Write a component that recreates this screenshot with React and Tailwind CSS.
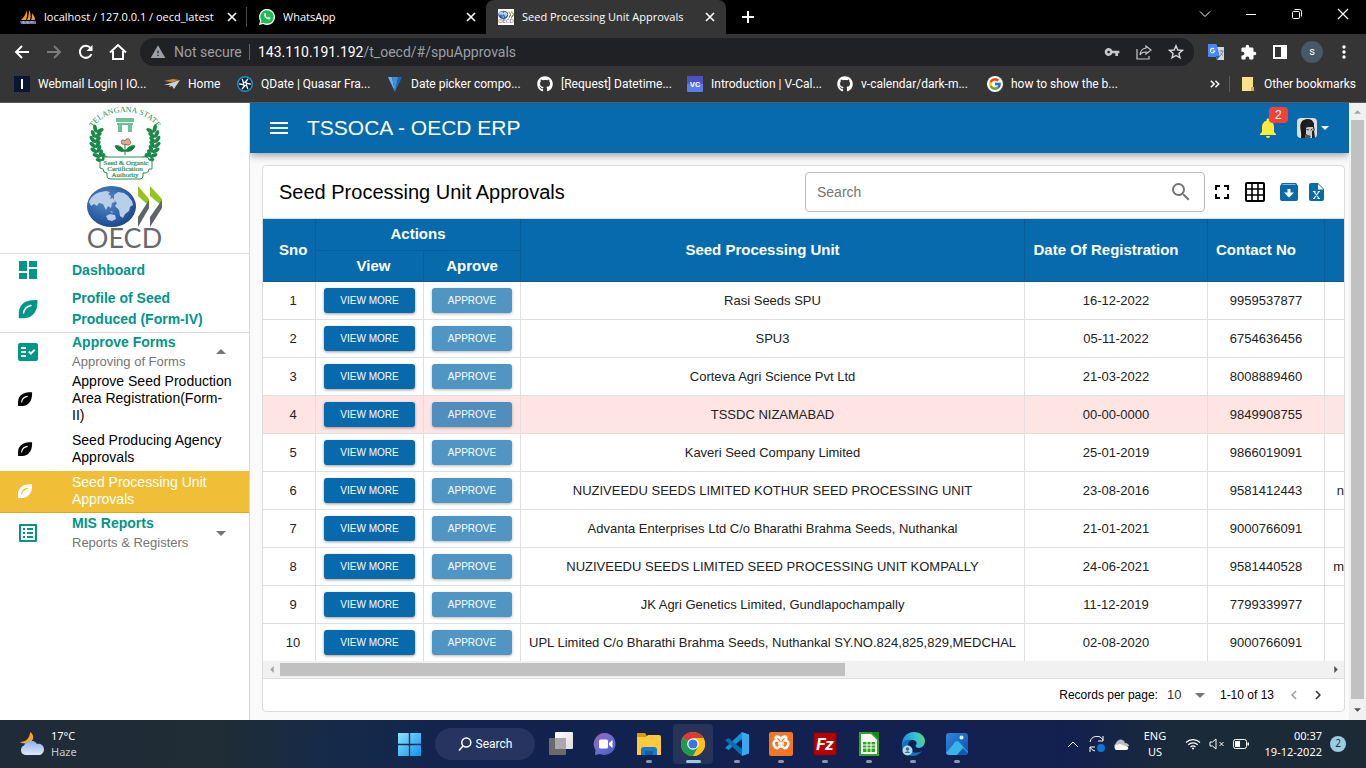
import React from "react";
import {
  MdDashboard, MdFactCheck, MdListAlt, MdMenu, MdNotifications, MdSearch, MdFullscreen,
  MdArrowDropDown, MdArrowDropUp, MdChevronLeft, MdChevronRight, MdWarning, MdVpnKey, MdExtension,
} from "react-icons/md";
import { FaGithub } from "react-icons/fa";
import { FcGoogle } from "react-icons/fc";

/* ---------- small drawings ---------- */

function Leaf({ className, vein = "#fff" }) {
  return (
    <svg viewBox="0 0 24 24" className={className} aria-hidden="true">
      <path d="M21.500 3.500Q21.500 3 21 3C15 3 10 3.500 6.500 7 3 10.500 2.500 14 2.800 21.200 10 21.500 13.500 21 17 17.500c3.500-3.500 4.500-8 4.500-14z" fill="currentColor" />
      <path d="M7.500 16C8 12.500 10.500 9.500 15 8.500" stroke={vein} strokeWidth="1.500" fill="none" strokeLinecap="round" />
    </svg>
  );
}

function Close() {
  return (
    <svg viewBox="0 0 16 16" className="size-4" aria-hidden="true">
      <path d="M4 4l8 8M12 4l-8 8" stroke="#fff" strokeWidth="1.600" />
    </svg>
  );
}

function Sails() {
  return (
    <svg viewBox="0 0 16 16" className="size-4 shrink-0" aria-hidden="true">
      <path d="M7 1C6 5 4 8 1 11h5c1-3 1.500-6 1-10z" fill="#f89c0e" />
      <path d="M9 1c2 3 2 7 1 10H7c1.500-3 2-6 2-10z" fill="#f89c0e" />
      <path d="M12 4c2 2 3 5 3 7h-4c1-2 1.400-4 1-7z" fill="#e8a13c" />
      <path d="M0 12h16v3H1z" fill="#6c78af" />
      <path d="M2 13h2v2M6 13h2v2M10 13h3" stroke="#c3c9e3" strokeWidth="0.800" fill="none" />
    </svg>
  );
}

function WhatsApp() {
  return (
    <svg viewBox="0 0 16 16" className="size-4 shrink-0" aria-hidden="true">
      <path d="M0 16l1.100-4A8 8 0 1 1 4.200 15z" fill="#fff" />
      <path d="M1.500 14.500l.8-3A6.700 6.700 0 1 1 4.600 13.700z" fill="#1ebd53" />
      <path d="M5.600 4.200c.5-.4.900-.3 1.100.2l.5 1.200c.1.400-.6.900-.5 1.200.5.900 1.300 1.600 2.200 2 .4.100.8-.8 1.200-.7l1.300.7c.4.300 0 1.200-.5 1.500-1 .6-2.500.1-4-1.200C5.300 7.700 4.300 5.400 5.600 4.200z" fill="#fff" />
    </svg>
  );
}

function Globe({ className, plate = false }) {
  return (
    <svg viewBox="0 0 78 64" className={className} role="img" aria-label="OECD logo">
      <defs>
        <radialGradient id="globe" cx="0.4" cy="0.35" r="0.75">
          <stop offset="0" stopColor="#5b8ac6" />
          <stop offset="0.600" stopColor="#2c5fa6" />
          <stop offset="1" stopColor="#1b3f7f" />
        </radialGradient>
      </defs>
      {plate && <rect width="78" height="64" fill="#fff" />}
      <ellipse cx="25.500" cy="21.500" rx="24.500" ry="20.500" fill="url(#globe)" />
      <path
        d="M3 17c1-4 6-9 12-10l5-1 4 1-2 2 3 2-1 3 3-1 2 4-3 1-1 5-3-2-2 4-3-6-4-1-2 3-3-2-3 2zM28 10l4-3 6 1 4 3 4 5 1 4-3 2-1 4-4 3-2 4-3-2-1-6-4-4 2-3-3-3zM20 31l4-2 5 1 1 4-4 2-4-1zM24 26l3 1-1 1z"
        fill="#b9cfe8"
      />
      <path d="M52 1l11 13v7L52 11z" fill="#97c31e" />
      <path d="M64 1l12 13v7L64 11z" fill="#97c31e" />
      <path d="M63 15v8L52 42V32z" fill="#626366" />
      <path d="M76 15v8L64 42V32z" fill="#626366" />
      <text x="38.500" y="63" textAnchor="middle" fontFamily="Lato, sans-serif" fontSize="27" fill="#68696c">OECD</text>
    </svg>
  );
}

const leafSteps = [0, 1, 2, 3, 4, 5, 6, 7];

function StateSeal() {
  return (
    <svg viewBox="0 0 76 76" className="h-[76px] w-[76px] overflow-visible" role="img" aria-label="Telangana State Seed and Organic Certification Authority">
      <defs>
        <path id="sealArc" d="M3 34A35 27 0 0 1 73 34" />
      </defs>
      <text fontFamily="Liberation Serif, serif" fontSize="8" fill="#2a8f55">
        <textPath href="#sealArc" startOffset="50%" textAnchor="middle">TELANGANA STATE</textPath>
      </text>
      {[-1, 1].map((side) =>
        leafSteps.map((i) => {
          const a = ((-24 + i * 10.5) * Math.PI) / 180;
          const x = 38 + side * Math.cos(a) * 30;
          const y = 36 + Math.sin(a) * 28;
          const t = side * (-24 + i * 10.5);
          return (
            <g key={side + "-" + i} transform={`translate(${x} ${y}) rotate(${t})`} fill="#178a48">
              <ellipse cx={-2.6} cy="0" rx="1.900" ry="4" transform="rotate(-38 -2.600 0)" />
              <ellipse cx={2.6} cy="0" rx="1.900" ry="4" transform="rotate(38 2.600 0)" />
            </g>
          );
        })
      )}
      <path d="M29 13h18v4H29zM30 18h16v2H30zM31 20h4v7h-4zM41 20h4v7h-4z" fill="#6fc096" />
      <path d="M38 50V38M38 46c-4-5-7-6-10-5 2 5 6 6 10 5zM38 46c4-5 7-6 10-5-2 5-6 6-10 5z" fill="#14813f" stroke="#14813f" strokeWidth="1" />
      <path d="M35 39c-2-4 1-5 3-3 1-3 5-3 5 0 2 2 0 4-2 4z" fill="#dcae95" stroke="#8a4b35" strokeWidth="0.800" />
      <path d="M17 52h42q3 0 3 3l3 1v8h-3q0 3-3 4h-3v3q0 3-3 3H24q-4 0-4-3v-3q-4 0-4-4l-3-1v-7l4-1z" fill="#fff" stroke="#2a8f55" strokeWidth="1" />
      <g fontFamily="Liberation Serif, serif" fontSize="7" fill="#2a8f55" stroke="#2a8f55" strokeWidth="0.200" textAnchor="middle">
        <text x="39" y="60">Seed &amp; Organic</text>
        <text x="38" y="66">Certification</text>
        <text x="38" y="72">Authority</text>
      </g>
    </svg>
  );
}

/* ---------- browser frame ---------- */

function Tab({ icon, title, active }) {
  return (
    <div
      className={
        "flex h-full w-60 items-center pl-3 " +
        (active ? "rounded-t-lg bg-[#353535]" : "")
      }
    >
      {icon}
      <span className="ml-2 w-[175px] whitespace-nowrap">{title}</span>
      <button aria-label={"Close " + title} className="ml-[5px] shrink-0"><Close /></button>
    </div>
  );
}

function TabStrip() {
  return (
    <div className="flex h-[34px] shrink-0 items-center bg-black pl-2 font-['Open_Sans',sans-serif] text-[11px] text-white">
      <div className="flex h-full w-[239px] items-center">
        <Tab icon={<Sails />} title="localhost / 127.0.0.1 / oecd_latest" />
        <span className="h-5 w-px shrink-0 bg-[#4a4a4a]" />
      </div>
      <div className="flex h-full w-[239px] items-center">
        <Tab icon={<WhatsApp />} title="WhatsApp" />
      </div>
      <Tab icon={<Globe className="size-4 shrink-0 bg-white" plate />} title="Seed Processing Unit Approvals" active />
      <button aria-label="New tab" className="ml-[14px]">
        <svg viewBox="0 0 16 16" className="size-4"><path d="M8 2v12M2 8h12" stroke="#fff" strokeWidth="2" /></svg>
      </button>
      <div className="ml-auto flex h-7 items-center self-start">
        <button aria-label="Search tabs" className="grid w-[46px] place-items-center">
          <svg viewBox="0 0 12 12" className="size-3"><path d="M1 3.500l5 5 5-5" stroke="#fff" fill="none" /></svg>
        </button>
        <button aria-label="Minimize" className="grid w-[46px] place-items-center">
          <svg viewBox="0 0 12 12" className="size-3"><path d="M1 6.500h10" stroke="#fff" /></svg>
        </button>
        <button aria-label="Restore" className="grid w-[46px] place-items-center">
          <svg viewBox="0 0 12 12" className="size-3" fill="none" stroke="#fff">
            <rect x="1.500" y="3.500" width="7" height="7" rx="1" />
            <path d="M3.500 1.500h5a2 2 0 0 1 2 2v5" />
          </svg>
        </button>
        <button aria-label="Close window" className="grid w-[46px] place-items-center">
          <svg viewBox="0 0 12 12" className="size-3"><path d="M1 1l10 10M11 1L1 11" stroke="#fff" strokeWidth="1.200" /></svg>
        </button>
      </div>
    </div>
  );
}

function ToolButton({ label, children }) {
  return <button aria-label={label} className="grid h-8 w-8 shrink-0 place-items-center text-white">{children}</button>;
}

function AddressBar() {
  return (
    <div className="flex h-9 shrink-0 items-center bg-[#353535] px-[6px]">
      <ToolButton label="Back">
        <svg viewBox="0 0 16 16" className="size-4" fill="none" stroke="#fff" strokeWidth="1.900"><path d="M15 8H2M8 2L2 8l6 6" /></svg>
      </ToolButton>
      <ToolButton label="Forward">
        <svg viewBox="0 0 16 16" className="size-4" fill="none" stroke="#7c7c7c" strokeWidth="1.900"><path d="M1 8h13M8 2l6 6-6 6" /></svg>
      </ToolButton>
      <ToolButton label="Reload">
        <svg viewBox="0 0 16 16" className="size-4" fill="none" stroke="#fff" strokeWidth="2"><path d="M13.500 10A6 6 0 1 1 12.500 4" /><path d="M14.500 1v6h-6z" fill="#fff" stroke="none" /></svg>
      </ToolButton>
      <ToolButton label="Home">
        <svg viewBox="0 0 18 18" className="size-[18px]" fill="none" stroke="#fff" strokeWidth="2"><path d="M1 9.500L9 2l8 7.500M4 8v8h10V8" /></svg>
      </ToolButton>
      <div className="ml-[6px] flex h-7 flex-1 items-center rounded-full bg-[#202124] pl-[10px] pr-[2px] text-sm text-[#9aa0a6]">
        <MdWarning className="size-4" />
        <span className="ml-2 w-[67px] whitespace-nowrap">Not secure</span>
        <span className="mx-2 h-4 w-px bg-[#5f6368]" />
        <span className="flex-1 whitespace-nowrap"><span className="text-white">143.110.191.192</span>/t_oecd/#/spuApprovals</span>
        <ToolButton label="Passwords"><MdVpnKey className="size-4 text-[#c7c9cc]" /></ToolButton>
        <ToolButton label="Share">
          <svg viewBox="0 0 16 16" className="size-4" fill="none" stroke="#c7c9cc" strokeWidth="1.200"><path d="M1 5v10h12v-3M10 2l5 4-5 4V8C7 8 5 9 4 11c0-4 3-6.500 6-7z" /></svg>
        </ToolButton>
        <ToolButton label="Bookmark this page">
          <svg viewBox="0 0 16 16" className="size-4" fill="none" stroke="#d7d9dc" strokeWidth="1.400"><path d="M8 1.800l1.800 4.200 4.600.4-3.500 3 1.100 4.500L8 11.500l-4 2.400 1.100-4.500-3.500-3L6.200 6z" /></svg>
        </ToolButton>
      </div>
      <div className="ml-[6px] flex">
        <ToolButton label="Google Translate">
          <svg viewBox="0 0 16 16" className="size-4">
            <path d="M6 3h10v13H9z" fill="#d4d7db" />
            <path d="M0 0h8.500L12 13H1q-1 0-1-1z" fill="#4688f1" />
            <path d="M8 12h4l-3 4z" fill="#2b59c3" />
            <path d="M6.300 5.200A2.200 2.200 0 1 0 6.700 7H5" stroke="#fff" strokeWidth="1.100" fill="none" />
            <path d="M11.500 7h4M13.500 6v1M15 7c-.5 2-2 4-3 5M12 8.500c1 1.500 2 2.500 3 3" stroke="#6b7a8c" strokeWidth="0.800" fill="none" />
          </svg>
        </ToolButton>
        <ToolButton label="Extensions"><MdExtension className="size-[17px]" /></ToolButton>
        <ToolButton label="Side panel">
          <svg viewBox="0 0 16 16" className="size-4"><path d="M1 1h14v14H1zM3 3v10h6V3z" fill="#fff" fillRule="evenodd" /></svg>
        </ToolButton>
        <ToolButton label="Profile"><span className="grid size-[22px] place-items-center rounded-full bg-[#455a64] text-[11px]">s</span></ToolButton>
        <ToolButton label="Menu">
          <svg viewBox="0 0 16 16" className="size-4" fill="#fff"><circle cx="8" cy="3" r="1.700" /><circle cx="8" cy="8" r="1.700" /><circle cx="8" cy="13" r="1.700" /></svg>
        </ToolButton>
      </div>
    </div>
  );
}

const bookmarks = [
  { title: "Webmail Login | IO...", icon: <svg viewBox="0 0 16 16" className="size-4"><path d="M0 0h16v16H0z" fill="#0a1433" /><path d="M7 3h2v10H7z" fill="#fff" /></svg> },
  { title: "Home", narrow: true, icon: <svg viewBox="0 0 16 16" className="size-4"><path d="M0 5l9-2 6 1-7 2z" fill="#dd8a3c" /><path d="M0 9l16-5-6 9-2-3-3 1 1-2z" fill="#cfd1d4" /></svg> },
  { title: "QDate | Quasar Fra...", icon: (
    <svg viewBox="0 0 16 16" className="size-4">
      <circle cx="8" cy="8" r="7.300" fill="#14222e" stroke="#1697dc" strokeWidth="1.400" />
      {[0, 60, 120, 180, 240, 300].map((r) => <path key={r} d="M8 6.500l3-3.500" stroke="#fff" strokeWidth="1.300" transform={`rotate(${r} 8 8)`} />)}
      <circle cx="8" cy="8" r="2.200" fill="#fff" /><circle cx="8" cy="8" r="1.200" fill="#1976d2" />
    </svg>
  ) },
  { title: "Date picker compo...", icon: <svg viewBox="0 0 16 16" className="size-4"><path d="M1 1h4l3 15z" fill="#63b5f6" /><path d="M15 1h-4L8 16z" fill="#1867c0" /><path d="M5 1h6L8 16z" fill="#3d8fe0" /></svg> },
  { title: "[Request] Datetime...", icon: <FaGithub className="size-4 text-white" /> },
  { title: "Introduction | V-Cal...", icon: <svg viewBox="0 0 16 16" className="size-4"><rect width="16" height="16" rx="1" fill="#5a7df0" /><path d="M0 0h16v8H0z" fill="#4a52c4" /><text x="8" y="11" textAnchor="middle" fontSize="8" fontWeight="700" fontFamily="Roboto, sans-serif" fill="#fff">VC</text></svg> },
  { title: "v-calendar/dark-m...", icon: <FaGithub className="size-4 text-white" /> },
  { title: "how to show the b...", icon: <span className="grid size-4 place-items-center rounded-full bg-white"><FcGoogle className="size-[14px]" /></span> },
];

function Bookmarks() {
  return (
    <nav className="flex h-[33px] shrink-0 items-center border-b border-[#5a5a5a] bg-[#353535] pb-1 pl-[14px] pr-[10px] text-xs text-white">
      <div className="flex flex-1 gap-4 overflow-hidden">
        {bookmarks.map((b) => (
          <a key={b.title} href="#bookmark" className="flex shrink-0 items-center gap-2">
            {b.icon}
            <span className={b.narrow ? "w-[33px] whitespace-nowrap" : "w-[110px] whitespace-nowrap"}>{b.title}</span>
          </a>
        ))}
      </div>
      <button aria-label="More bookmarks" className="px-[9px]">
        <svg viewBox="0 0 12 12" className="size-[10px]" fill="none" stroke="#fff" strokeWidth="1.800"><path d="M1 2l4 4-4 4M6.500 2l4 4-4 4" /></svg>
      </button>
      <span className="h-4 w-px bg-[#5a5a5a]" />
      <a href="#other" className="ml-[11px] flex items-center gap-[9px]">
        <svg viewBox="0 0 14 16" className="h-4 w-[14px]"><path d="M1 1h11v14H1z" fill="#fbe08a" /><path d="M10 11h3v4h-3z" fill="#d9ac3a" /></svg>
        Other bookmarks
      </a>
    </nav>
  );
}

/* ---------- application ---------- */

function Sidebar() {
  const title = "text-sm font-bold text-[#009688]";
  return (
    <aside className="w-[250px] shrink-0 overflow-hidden border-r border-[#d8d8d8] bg-white">
      <div className="flex h-[151px] flex-col items-center gap-1 border-b border-[#dcdcdc] pt-[2px]">
        <StateSeal />
        <Globe className="h-[64px] w-[78px] overflow-visible" />
      </div>
      <nav>
        <a href="#dashboard" className="flex h-8 items-center px-4">
          <MdDashboard className="size-6 text-[#009688]" />
          <span className={"ml-8 " + title}>Dashboard</span>
        </a>
        <a href="#profile" className="flex h-[47px] items-center border-b border-[#dcdcdc] px-4">
          <Leaf className="size-6 shrink-0 text-[#009688]" />
          <span className={"ml-8 w-36 leading-[21px] " + title}>Profile of Seed Produced (Form-IV)</span>
        </a>
        <button className="flex h-10 w-full items-center px-4 pb-[2px] text-left">
          <MdFactCheck className="size-6 text-[#009688]" />
          <span className="ml-8 flex-1">
            <span className={"block leading-5 " + title}>Approve Forms</span>
            <span className="block text-[13px] leading-5 text-[#757575]">Approving of Forms</span>
          </span>
          <MdArrowDropUp className="size-6 text-[#757575]" />
        </button>
        <a href="#area" className="flex h-[51px] items-center pl-4 text-sm leading-[17px] text-black">
          <Leaf className="size-[18px] shrink-0 text-black" />
          <span className="ml-[38px]">Approve Seed Production Area Registration(Form-<br />II)</span>
        </a>
        <a href="#agency" className="flex h-[47px] items-center pl-4 pt-[2px] text-sm leading-[17px] text-black">
          <Leaf className="size-[18px] shrink-0 text-black" />
          <span className="ml-[38px]">Seed Producing Agency Approvals</span>
        </a>
        <a href="#unit" className="flex h-[42px] items-center border-b border-[#d9a92c] bg-[#f1bf37] px-4 pb-[2px] text-sm leading-[17px] text-white">
          <Leaf className="size-[18px] shrink-0 text-white" vein="#f1bf37" />
          <span className="ml-[38px]">Seed Processing Unit Approvals</span>
        </a>
        <button className="flex h-10 w-full items-center px-4 text-left">
          <MdListAlt className="size-6 text-[#009688]" />
          <span className="ml-8 flex-1">
            <span className={"block leading-5 " + title}>MIS Reports</span>
            <span className="block text-[13px] leading-5 text-[#757575]">Reports &amp; Registers</span>
          </span>
          <MdArrowDropDown className="size-6 text-[#757575]" />
        </button>
      </nav>
    </aside>
  );
}

function Avatar() {
  return (
    <svg viewBox="0 0 20 20" className="size-5 rounded" role="img" aria-label="User">
      <path d="M0 0h20v20H0z" fill="#dedede" />
      <path d="M4 20C5 14 2 9 4 5c1-3 4-4 7-4 5 0 6 4 6 8l1 4-3-3-6 0v6l-1 4z" fill="#1a1a1a" />
      <path d="M9 9l7 0 1 5-4 4-4-3z" fill="#c8c8c8" />
      <path d="M9.500 11.500l2.500.5M13.500 12l2-1" stroke="#333" />
      <path d="M7 10c3 0 5-1 6-4l4 4V5l-6-3z" fill="#222" />
      <path d="M9 16l5 2-1 2H8z" fill="#555" />
      <path d="M15 13l2-1 1 8h-3z" fill="#222" />
    </svg>
  );
}

function AppHeader() {
  return (
    <header className="relative flex h-[50px] shrink-0 items-center bg-[#076aad] pl-[17px] pr-5 text-white shadow-[0_2px_8px_rgba(0,0,0,0.4)]">
      <button aria-label="Toggle menu"><MdMenu className="size-6" /></button>
      <h1 className="ml-4 flex-1 text-[21px]">TSSOCA - OECD ERP</h1>
      <button aria-label="Notifications" className="relative mr-[17px]">
        <MdNotifications className="size-6 text-[#ffeb3b]" />
        <span className="absolute -top-[9px] left-[13px] rounded bg-[#f44336] px-[6px] text-xs leading-4">2</span>
      </button>
      <button aria-label="Account" className="flex items-center gap-1">
        <Avatar />
        <svg viewBox="0 0 8 4" className="h-1 w-2"><path d="M0 0h8L4 4z" fill="#fff" /></svg>
      </button>
    </header>
  );
}

const rows = [
  ["Rasi Seeds SPU", "16-12-2022", "9959537877", ""],
  ["SPU3", "05-11-2022", "6754636456", ""],
  ["Corteva Agri Science Pvt Ltd", "21-03-2022", "8008889460", ""],
  ["TSSDC NIZAMABAD", "00-00-0000", "9849908755", ""],
  ["Kaveri Seed Company Limited", "25-01-2019", "9866019091", ""],
  ["NUZIVEEDU SEEDS LIMITED KOTHUR SEED PROCESSING UNIT", "23-08-2016", "9581412443", "n"],
  ["Advanta Enterprises Ltd C/o Bharathi Brahma Seeds, Nuthankal", "21-01-2021", "9000766091", ""],
  ["NUZIVEEDU SEEDS LIMITED SEED PROCESSING UNIT KOMPALLY", "24-06-2021", "9581440528", "m"],
  ["JK Agri Genetics Limited, Gundlapochampally", "11-12-2019", "7799339977", ""],
  ["UPL Limited C/o Bharathi Brahma Seeds, Nuthankal SY.NO.824,825,829,MEDCHAL", "02-08-2020", "9000766091", ""],
];

function UnitTable() {
  const th = "border-b border-r border-[#0a5d97] p-0 ";
  return (
    <table className="w-full table-fixed border-separate border-spacing-0 text-center text-[13px] text-[#222]">
      <colgroup>
        <col className="w-[53px]" />
        <col className="w-[108px]" />
        <col className="w-[97px]" />
        <col className="w-[504px]" />
        <col className="w-[183px]" />
        <col className="w-[117px]" />
        <col />
      </colgroup>
      <thead className="bg-[#076aad] text-[15px] font-bold text-white">
        <tr className="h-8">
          <th rowSpan={2} className={th + "pl-4 pr-2"}>Sno</th>
          <th colSpan={2} className={th}>Actions</th>
          <th rowSpan={2} className={th + "pl-2 pr-7"}>Seed Processing Unit</th>
          <th rowSpan={2} className={th + "whitespace-nowrap pl-2 pr-7"}>Date Of Registration</th>
          <th rowSpan={2} className={th + "whitespace-nowrap pl-2 pr-7"}>Contact No</th>
          <th rowSpan={2} className="border-b border-[#0a5d97] p-0" />
        </tr>
        <tr className="h-[31px]">
          <th className={th + "pl-4 pr-2"}>View</th>
          <th className={th}>Aprove</th>
        </tr>
      </thead>
      <tbody>
        {rows.map((r, i) => {
          const last = i === rows.length - 1;
          const td = "border-r border-[#dfdfdf] py-0 " + (last ? "" : "border-b ");
          return (
            <tr key={i} className={(last ? "h-[37px] " : "h-[38px] ") + (i === 3 ? "bg-[#ffe4e4]" : "bg-white")}>
              <td className={td + "pl-4 pr-2"}>{i + 1}</td>
              <td className={td + "px-2"}>
                <button className="block h-[25px] w-full rounded-[3px] bg-[#076aad] text-[10px] text-white shadow-[0_1px_3px_rgba(0,0,0,0.4)]">VIEW MORE</button>
              </td>
              <td className={td + "px-2"}>
                <button className="block h-[25px] w-full rounded-[3px] bg-[#076aad] text-[10px] text-white opacity-70 shadow-[0_1px_3px_rgba(0,0,0,0.4)]">APPROVE</button>
              </td>
              <td className={td + "whitespace-nowrap px-2"}>{r[0]}</td>
              <td className={td + "px-2"}>{r[1]}</td>
              <td className={td + "px-2"}>{r[2]}</td>
              <td className={"overflow-hidden border-[#dfdfdf] p-0 text-right " + (last ? "" : "border-b")}>{r[3]}</td>
            </tr>
          );
        })}
      </tbody>
    </table>
  );
}

function Card() {
  return (
    <section className="ml-3 mr-1 mt-3 overflow-hidden rounded border border-[#dcdcdc] bg-white">
      <div className="flex h-[53px] items-center border-b border-[#dcdcdc] px-4">
        <h2 className="flex-1 text-xl text-black">Seed Processing Unit Approvals</h2>
        <label className="flex h-10 w-[400px] items-center rounded border border-[#bdbdbd] px-[11px]">
          <input aria-label="Search" placeholder="Search" className="min-w-0 flex-1 text-sm text-black outline-none placeholder:text-[#757575]" />
          <MdSearch className="size-6 text-[#757575]" />
        </label>
        <button aria-label="Fullscreen" className="ml-[5px]"><MdFullscreen className="size-6 text-black" /></button>
        <button aria-label="Columns" className="ml-[11px]">
          <svg viewBox="0 0 20 20" className="size-5" fill="none" stroke="#000" strokeWidth="1.600"><rect x="1" y="1" width="18" height="18" rx="1" strokeWidth="2" /><path d="M7 1v18M13 1v18M1 7h18M1 13h18" /></svg>
        </button>
        <button aria-label="Export archive" className="ml-[15px]">
          <svg viewBox="0 0 18 18" className="size-[18px]"><path d="M2 0h14l2 3v13q0 2-2 2H2q-2 0-2-2V3zM2.500 1.500v.5h13v-.5z" fill="#076aad" fillRule="evenodd" /><path d="M7.500 6h3v3.500H14l-5 5-5-5h3.500z" fill="#fff" /></svg>
        </button>
        <button aria-label="Export to Excel" className="ml-[11px] mr-1">
          <svg viewBox="0 0 15 18" className="h-[18px] w-[15px]"><path d="M2 0h7l6 6v10q0 2-2 2H2q-2 0-2-2V2q0-2 2-2z" fill="#076aad" /><path d="M9 1v5.500h5.500z" fill="#fff" /><path d="M5 8.500l5 7M10 8.500l-5 7M4 8.500h2.500M8.800 8.500h2M4 15.500h2M8.500 15.500H11" stroke="#fff" strokeWidth="1.200" fill="none" /></svg>
        </button>
      </div>
      <div className="overflow-hidden"><UnitTable /></div>
      <div className="flex h-[17px] items-center bg-[#f1f1f1]">
        <span className="grid w-[17px] place-items-center"><svg viewBox="0 0 4 8" className="h-[7px] w-1"><path d="M4 0v8L0 4z" fill="#a3a3a3" /></svg></span>
        <span className="flex flex-1"><span className="h-[13px] w-[54%] bg-[#c1c1c1]" /></span>
        <span className="grid w-[17px] place-items-center"><svg viewBox="0 0 4 8" className="h-[7px] w-1"><path d="M0 0v8l4-4z" fill="#505050" /></svg></span>
      </div>
      <div className="flex h-[33px] items-center justify-end border-t border-[#dcdcdc] pr-[14px] text-xs text-black">
        <label htmlFor="perPage" className="mr-[9px]">Records per page:</label>
        <div className="flex items-center">
          <select id="perPage" className="w-[21px] appearance-none text-[13px] text-[#333] outline-none"><option>10</option></select>
          <MdArrowDropDown className="size-6 text-[#757575]" />
        </div>
        <span className="ml-2 mr-2">1-10 of 13</span>
        <button aria-label="Previous page" className="grid w-6 place-items-center"><MdChevronLeft className="size-[18px] text-[#9e9e9e]" /></button>
        <button aria-label="Next page" className="grid w-6 place-items-center"><MdChevronRight className="size-[18px] text-[#333]" /></button>
      </div>
    </section>
  );
}

function PageScrollbar() {
  return (
    <div className="flex w-[17px] shrink-0 flex-col items-center bg-[#f1f1f1]">
      <span className="grid h-[17px] place-items-center"><svg viewBox="0 0 8 4" className="h-1 w-[7px]"><path d="M0 4h8L4 0z" fill="#a3a3a3" /></svg></span>
      <span className="w-[13px] flex-1 bg-[#c1c1c1]" />
      <span className="grid h-[21px] place-items-center"><svg viewBox="0 0 8 4" className="h-1 w-[7px]"><path d="M0 0h8L4 4z" fill="#505050" /></svg></span>
    </div>
  );
}

/* ---------- taskbar ---------- */

function Gradients() {
  return (
    <defs>
      <linearGradient id="winTile" x1="0" y1="0" x2="1" y2="1"><stop offset="0" stopColor="#8ae4fb" /><stop offset="1" stopColor="#0a95f0" /></linearGradient>
      <linearGradient id="chat" x1="0" y1="0" x2="1" y2="1"><stop offset="0" stopColor="#9a63b4" /><stop offset="0.500" stopColor="#6b6fd0" /><stop offset="1" stopColor="#4a56c0" /></linearGradient>
      <linearGradient id="photo" x1="0" y1="0" x2="1" y2="1"><stop offset="0" stopColor="#2f86d6" /><stop offset="1" stopColor="#1450a8" /></linearGradient>
      <linearGradient id="edge" x1="0" y1="0.400" x2="1" y2="0.200"><stop offset="0" stopColor="#1b8fd8" /><stop offset="0.600" stopColor="#35c1d8" /><stop offset="1" stopColor="#5fd96a" /></linearGradient>
      <linearGradient id="tview" x1="0" y1="0" x2="1" y2="1"><stop offset="0" stopColor="#fff" /><stop offset="1" stopColor="#dcdcdc" /></linearGradient>
      <linearGradient id="cloud" x1="0" y1="0" x2="0" y2="1"><stop offset="0" stopColor="#8db1ee" /><stop offset="1" stopColor="#dfe8f8" /></linearGradient>
    </defs>
  );
}

const apps = [
  { name: "Task view", art: <><rect x="0" y="6" width="17" height="17" rx="1" fill="#6a6a6a" /><rect x="6" y="0" width="18" height="17" rx="1" fill="url(#tview)" /><path d="M6 6h11v11H6z" fill="#a9a9a9" /></> },
  { name: "Chat", art: <><path d="M12 1a11 11 0 1 1-5 21l-5 1 .5-5A11 11 0 0 1 12 1z" fill="url(#chat)" /><rect x="6" y="7.500" width="9" height="9" rx="1.500" fill="#fff" /><path d="M16 11l3.500-3v8L16 13z" fill="#fff" /></> },
  { name: "File Explorer", run: true, art: <><path d="M0 1h8l2 3h12v8H0z" fill="#d99a14" /><path d="M0 5h9l2-2h11q2 0 2 2v18H0z" fill="#fccb3d" /><path d="M4 23v-5q0-3 3-3h10q3 0 3 3v5z" fill="#1a78c8" /><path d="M8 19h8v4H8z" fill="#115ea3" /></> },
  { name: "Google Chrome", run: true, active: true, art: <><circle cx="12" cy="12" r="12" fill="#fbc116" /><path d="M12 12L1.600 6A12 12 0 0 1 22.400 6H12z" fill="#dc3b2f" /><path d="M12 12L1.600 6A12 12 0 0 0 12 24l5.200-9z" fill="#1d9b4e" /><path d="M22.400 6H12l5.200 9L12 24A12 12 0 0 0 22.400 6z" fill="#fbc116" /><circle cx="12" cy="12" r="5.800" fill="#fff" /><circle cx="12" cy="12" r="4.600" fill="#3578e5" /></> },
  { name: "Visual Studio Code", run: true, art: <><path d="M17 0v7L3.500 18 0 16z" fill="#1a8fd6" /><path d="M17 24v-7L3.500 6 0 8z" fill="#0c6cb0" /><path d="M17 0l7 2.500v19L17 24z" fill="#37a9ee" /></> },
  { name: "XAMPP", run: true, art: <><rect width="24" height="24" rx="2" fill="#f37625" /><path d="M8 8.500c-4-5 2-5 4-1 2-4 8-4 4 1 3 0 4 2 3 4.500s-3 4.500-5 2c-1-1-3-1-4 0-2 2.500-4 .500-5-2S5 8.500 8 8.500zM9 11.500h6" stroke="#fff" strokeWidth="2.600" fill="none" /></> },
  { name: "FileZilla", run: true, art: <><rect x="1" y="1" width="22" height="22" fill="#b40505" stroke="#8a0202" strokeWidth="2" strokeDasharray="1.500 1.500" /><text x="12" y="18" textAnchor="middle" fontFamily="Roboto, sans-serif" fontSize="17" fontStyle="italic" fontWeight="700" fill="#fff">Fz</text></> },
  { name: "LibreOffice Calc", run: true, art: <><path d="M2 0h13l7 7v17H2z" fill="#2fa81c" /><path d="M4 2h10l6 6v14H4z" fill="#fff" /><path d="M15 0h7v8z" fill="#1f8410" /><path d="M6 10h12v10H6z" fill="#2fa81c" /><path d="M6 13h12M6 16h12M10 10v10M14 10v10" stroke="#fff" strokeWidth="1" /></> },
  { name: "Microsoft Edge", run: true, art: <><path d="M1 13C1 5 6 0 13 0c6 0 11 4 11 9 0 4-3 7-6 7s-4-2-3-3c2-3-1-5-4-5-5 0-9 3-10 5z" fill="url(#edge)" /><path d="M1 12c2-3 5-5 9-4-4 2-4 8 0 11 3 2 7 2 11 0-2 3-6 5-9 5-6 0-12-5-11-12z" fill="#1273c0" /><circle cx="6.500" cy="18.500" r="5" fill="#b8dcee" /><circle cx="6.500" cy="17" r="1.800" fill="#3b7390" /><path d="M3.500 21q3-3.500 6 0z" fill="#3b7390" /></> },
  { name: "Photos", run: true, art: <><rect x="1" y="1" width="22" height="22" rx="3" fill="url(#photo)" /><path d="M1 21L10 10q2-2 4 0l9 10q-1 3-3 3H4q-2 0-3-2z" fill="#35b5ea" /><path d="M12 23l6-7 5 5q-1 2-3 2z" fill="#145aa8" /><circle cx="16.500" cy="5.500" r="2" fill="#dff2ff" /></> },
];

function Taskbar() {
  return (
    <footer className="flex h-12 shrink-0 items-center bg-[linear-gradient(90deg,#1f2b38_0%,#202d36_16%,#152a49_24%,#12234f_35%,#122050_78%,#1b2a38_86%,#1c2a36_100%)] font-['Noto_Sans',sans-serif] text-xs text-white">
      <button className="flex flex-1 items-center gap-[7px] pl-5 text-left">
        <svg viewBox="0 0 24 24" className="size-6">
          <Gradients />
          <path d="M10 0c5 3 4 10-2 11-4 1-7 0-8-1C6 10 10 6 10 0z" fill="#f4a529" />
          <path d="M5 23a5 5 0 0 1-1-9.500C6 8 14 7 17 12c4-1 7 2 7 5.500S21 23 19 23z" fill="url(#cloud)" />
        </svg>
        <span className="text-[11px] leading-4"><span className="block">17°C</span><span className="block text-[#c4c8cc]">Haze</span></span>
      </button>
      <div className="flex items-center">
        <button aria-label="Start" className="grid h-10 w-11 place-items-center">
          <svg viewBox="0 0 24 24" className="size-[23px]"><path d="M0 0h11.300v11.300H0zM12.700 0H24v11.300H12.700zM0 12.700h11.300V24H0zM12.700 12.700H24V24H12.700z" fill="url(#winTile)" /></svg>
        </button>
        <button className="mx-1 flex h-8 w-[100px] items-center justify-center gap-1 rounded-full bg-[#25355f] font-[Roboto,sans-serif]">
          <svg viewBox="0 0 14 14" className="size-[14px]" fill="none" stroke="#fff" strokeWidth="1.500"><circle cx="8.300" cy="5.500" r="4.500" /><path d="M5 9l-4 4.500" /></svg>
          Search
        </button>
        {apps.map((a) => (
          <button key={a.name} aria-label={a.name} className="flex h-12 w-11 items-center justify-center">
            <span className={"flex h-10 w-10 flex-col items-center rounded pt-2 " + (a.active ? "bg-[#26345c]" : "")}>
              <svg viewBox="0 0 24 24" className="size-6">{a.art}</svg>
              {a.run && <span className={"mt-1 h-[3px] shrink-0 rounded-full " + (a.active ? "w-[15px] bg-[#9cc9dd]" : "w-[6px] bg-[#8e96ac]")} />}
            </span>
          </button>
        ))}
      </div>
      <div className="flex flex-1 items-center justify-end pr-5 text-[11px]">
        <button aria-label="Hidden icons" className="grid w-6 place-items-center"><svg viewBox="0 0 12 8" className="h-2 w-3" fill="none" stroke="#fff"><path d="M1 7l5-5 5 5" /></svg></button>
        <button aria-label="Updates" className="grid w-6 place-items-center">
          <svg viewBox="0 0 16 16" className="size-4" fill="none" stroke="#fff"><path d="M1 6A7 7 0 0 1 14 4M14 0v5H9M6 15A7 7 0 0 1 1 11M1 16v-5h5" /><circle cx="12" cy="12" r="4" fill="#0a78d6" stroke="none" /></svg>
        </button>
        <button aria-label="OneDrive" className="grid w-6 place-items-center"><svg viewBox="0 0 16 11" className="h-[11px] w-4"><path d="M4 11a4 4 0 0 1-1-7C5 0 10-1 12 4c3 0 4 2 4 3z" fill="#b9bcc0" /><path d="M3 11a3 3 0 0 1 0-5l4-1 8 3q1 3-2 3z" fill="#fff" /></svg></button>
        <button className="ml-2 w-[28px] text-center leading-4">ENG<br />US</button>
        <button aria-label="Network, sound and battery" className="ml-4 flex items-center gap-2">
          <svg viewBox="0 0 16 12" className="h-3 w-4" fill="none" stroke="#fff" strokeWidth="1.200"><path d="M1 4.500a10 10 0 0 1 14 0M3.300 6.800a6.800 6.800 0 0 1 9.400 0M5.500 9a3.600 3.600 0 0 1 5 0" /><circle cx="8" cy="10.500" r="1" fill="#fff" stroke="none" /></svg>
          <svg viewBox="0 0 16 12" className="h-3 w-4" fill="none" stroke="#fff"><path d="M1 4h2.500L7 1v10L3.500 8H1zM10.500 4l4 4M14.500 4l-4 4" /></svg>
          <svg viewBox="0 0 16 10" className="h-[10px] w-4" fill="none" stroke="#fff"><rect x="0.500" y="0.500" width="13" height="9" rx="2" /><path d="M2 2h5v6H2z" fill="#fff" stroke="none" /><path d="M15.200 3.500v3" strokeWidth="1.500" /></svg>
        </button>
        <span className="ml-3 w-[61px] whitespace-nowrap text-right leading-4">00:37<br />19-12-2022</span>
        <span className="ml-2 grid size-4 place-items-center rounded-full bg-[#9ccbe2] text-[10px] text-[#12303f]">2</span>
      </div>
    </footer>
  );
}

export default function App() {
  return (
    <div className="flex h-screen flex-col overflow-hidden font-[Roboto,sans-serif]">
      <TabStrip />
      <AddressBar />
      <Bookmarks />
      <div className="flex min-h-0 flex-1 bg-[#fafafa] font-['Liberation_Sans',Arial,sans-serif]">
        <Sidebar />
        <main className="min-w-0 flex-1 overflow-hidden">
          <AppHeader />
          <Card />
        </main>
        <PageScrollbar />
      </div>
      <Taskbar />
    </div>
  );
}
